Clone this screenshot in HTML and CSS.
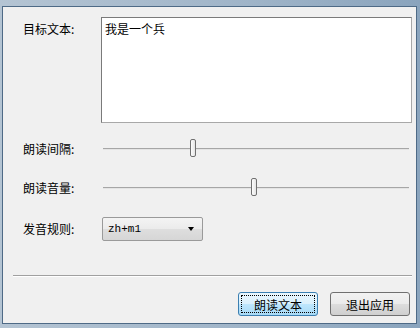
FILE: index.html
```html
<!DOCTYPE html>
<html lang="zh-CN">
<head>
    <meta charset="UTF-8">
    <title>朗读</title>
    <link rel="stylesheet" href="styles.css">
</head>
<body>
    <div class="window">
        <div class="client">
            <div class="form">
                <div class="row row-text">
                    <label class="label label-top">目标文本:</label>
                    <div class="textbox">我是一个兵</div>
                </div>
                <div class="row row-slider first-slider">
                    <label class="label">朗读间隔:</label>
                    <div class="slider">
                        <span class="handle" style="left: 89px;"></span>
                    </div>
                </div>
                <div class="row row-slider second-slider">
                    <label class="label">朗读音量:</label>
                    <div class="slider">
                        <span class="handle" style="left: 150px;"></span>
                    </div>
                </div>
                <div class="row row-combo">
                    <label class="label">发音规则:</label>
                    <div class="combo">
                        <span class="combo-value">zh+m1</span>
                        <span class="combo-arrow"></span>
                    </div>
                </div>
            </div>
            <div class="separator"></div>
            <div class="buttons">
                <button class="btn btn-default"><span>朗读文本</span></button>
                <button class="btn">退出应用</button>
            </div>
        </div>
    </div>
</body>
</html>
```

FILE: styles.css
```css
/* Page */
body {
    margin: 0;
    font-family: "Noto Sans CJK SC", "DejaVu Sans", sans-serif;
    font-size: 12px;
    color: #000;
}

/* Window frame */
.window {
    width: 420px;
    height: 328px;
    box-sizing: border-box;
    padding: 6px 3px 4px 2px;
    background: linear-gradient(90deg, #b4c4d3, #9fb4c8 60%, #8aa4bd);
}

.client {
    height: 100%;
    box-sizing: border-box;
    border: 1px solid #4e6a86;
    background: #f0f0f0;
    padding: 10px 4px 0 10px;
}

/* Form rows */
.form {
    padding-left: 10px;
}

.row {
    display: flex;
    align-items: center;
}

.label {
    width: 78px;
    flex: none;
    line-height: 14px;
}

.row-text {
    align-items: flex-start;
}

.label-top {
    padding-top: 5px;
}

.textbox {
    flex: 1;
    height: 106px;
    box-sizing: border-box;
    border: 1px solid #7a7a7a;
    border-right-color: #a8a8a8;
    border-bottom-color: #a8a8a8;
    background: #fff;
    padding: 4px 3px;
    line-height: 14px;
}

/* Sliders */
.row-slider {
    height: 21px;
}

.first-slider {
    margin-top: 15px;
}

.second-slider {
    margin-top: 18px;
}

.slider {
    flex: 1;
    height: 21px;
    position: relative;
}

.slider::before {
    content: "";
    position: absolute;
    left: 2px;
    right: 3px;
    top: 10px;
    height: 1px;
    background: #a6a6a6;
    border-bottom: 1px solid #e4e4e4;
}

.handle {
    position: absolute;
    top: 1px;
    width: 6px;
    height: 18px;
    box-sizing: border-box;
    border: 1px solid #707070;
    border-radius: 2px;
    background: linear-gradient(90deg, #fdfdfd, #e4e4e4);
}

/* Combo box */
.row-combo {
    margin-top: 19px;
}

.combo {
    margin-left: 1px;
    width: 101px;
    height: 24px;
    box-sizing: border-box;
    border: 1px solid #9a9a9a;
    border-radius: 2px;
    background: linear-gradient(#f4f4f4, #ebebeb 50%, #dedede 51%, #d6d6d6);
    display: flex;
    align-items: center;
    justify-content: space-between;
    padding: 0 8px 0 5px;
}

.combo-value {
    font-family: "Liberation Mono", "DejaVu Sans Mono", monospace;
    font-size: 11px;
}

.combo-arrow {
    width: 0;
    height: 0;
    border-left: 3px solid transparent;
    border-right: 3px solid transparent;
    border-top: 4px solid #000;
}

/* Separator and buttons */
.separator {
    margin-top: 34px;
    height: 1px;
    background: #a0a0a0;
    border-bottom: 1px solid #fff;
}

.buttons {
    display: flex;
    justify-content: flex-end;
    gap: 12px;
    margin-top: 15px;
    margin-right: 2px;
}

.btn {
    width: 80px;
    height: 24px;
    box-sizing: border-box;
    border: 1px solid #707070;
    border-radius: 3px;
    background: linear-gradient(#f2f2f2, #ebebeb 50%, #dddddd 51%, #cfcfcf);
    font-family: inherit;
    font-size: 12px;
    padding: 0;
    color: #000;
}

.btn-default {
    border-color: #3c7fb1;
    background: linear-gradient(#eaf6fd, #d9f0fc 50%, #bee6fd 51%, #a7d9f5);
    padding: 2px;
}

.btn-default span {
    display: flex;
    align-items: center;
    justify-content: center;
    height: 100%;
    border: 1px dotted #000;
    box-sizing: border-box;
}
```
